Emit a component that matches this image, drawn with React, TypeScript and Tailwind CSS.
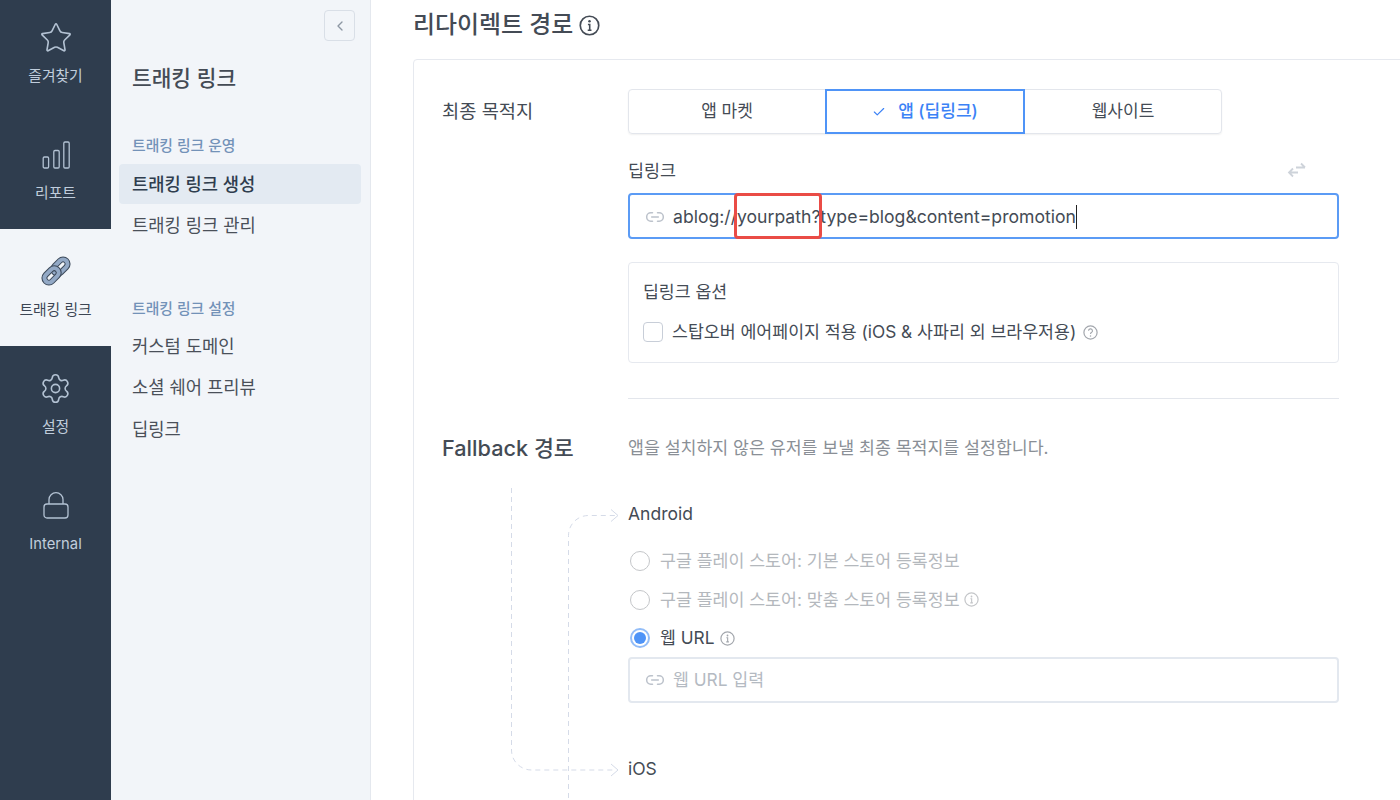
import { Check, ChevronLeft, Link2, Settings, Star } from "lucide-react";

const font = "font-['Inter','Noto_Sans_CJK_KR',sans-serif]";

function ChartIcon() {
  return (
    <svg width="28" height="28" viewBox="0 0 28 28" fill="none" stroke="currentColor" strokeWidth="1.3" className="mt-[2px]">
      <rect x="1.2" y="16" width="5.4" height="11" rx="1.2" />
      <rect x="11.8" y="9.5" width="5.4" height="17.5" rx="1.2" />
      <rect x="21.8" y="1" width="5.4" height="26" rx="1.2" />
    </svg>
  );
}

function LockIcon() {
  return (
    <svg width="26" height="27" viewBox="0 0 26 27" fill="none" stroke="currentColor" strokeWidth="1.3">
      <rect x="1" y="12" width="24" height="14" rx="3" />
      <path d="M6 12V7.5a7 6.8 0 0 1 14 0V12" />
    </svg>
  );
}

function ChainIcon() {
  return (
    <svg width="32" height="32" viewBox="0 0 32 32" fill="none">
      <g transform="rotate(-45 16 16)">
        <rect x="14" y="11.5" width="16.5" height="9" rx="4.5" stroke="#3d4a5b" strokeWidth="6" />
        <rect x="14" y="11.5" width="16.5" height="9" rx="4.5" stroke="#93a9c6" strokeWidth="3.9" />
        <rect x="1.5" y="11.5" width="16.5" height="9" rx="4.5" stroke="#3d4a5b" strokeWidth="6" />
        <rect x="1.5" y="11.5" width="16.5" height="9" rx="4.5" stroke="#93a9c6" strokeWidth="3.9" />
      </g>
    </svg>
  );
}

function InfoIcon({ size, color, mark = "i" }: { size: number; color: string; mark?: string }) {
  return (
    <svg width={size} height={size} viewBox="0 0 20 20" fill="none" className="shrink-0">
      <circle cx="10" cy="10" r="8.8" stroke={color} strokeWidth="1.6" />
      {mark === "i" ? (
        <>
          <circle cx="10" cy="6" r="1.2" fill={color} />
          <path d="M8.5 9h1.7v5.5M8.3 14.5h3.6" stroke={color} strokeWidth="1.5" />
        </>
      ) : (
        <>
          <path d="M7.4 7.8a2.6 2.6 0 1 1 3.8 2.3c-.8.5-1.2 1-1.2 1.9" stroke={color} strokeWidth="1.5" />
          <circle cx="10" cy="14.6" r="1" fill={color} />
        </>
      )}
    </svg>
  );
}

function RailItem({ label, active, children }: { label: string; active?: boolean; children: React.ReactNode }) {
  return (
    <div
      className={`flex h-[117px] flex-col items-center pt-[27px] text-[14.8px] ${
        active ? "bg-[#f2f5f9] text-[#3c4654]" : "text-[#c0cddc]"
      }`}
    >
      <div className={`flex h-[30px] items-center justify-center ${active ? "" : "text-[#b3c2d3]"}`}>{children}</div>
      <span className="mt-[14px] leading-5">{label}</span>
    </div>
  );
}

function Radio({ label, checked, children }: { label: string; checked?: boolean; children?: React.ReactNode }) {
  return (
    <div className={`flex h-[38.5px] items-center text-[17.3px] ${checked ? "text-[#444b55]" : "text-[#b4b8bd]"}`}>
      {checked ? (
        <span className="ml-[2px] flex size-5 items-center justify-center rounded-full border-2 border-[#93bdf8]">
          <span className="size-3 rounded-full bg-[#4f94f7]" />
        </span>
      ) : (
        <span className="ml-[2px] size-5 rounded-full border-[1.5px] border-[#c4c6c9]" />
      )}
      <span className="ml-[10px]">{label}</span>
      {children}
    </div>
  );
}

export default function App() {
  return (
    <div className={`flex h-[800px] w-[1400px] overflow-hidden bg-white ${font}`}>
      {/* icon rail */}
      <aside className="w-[111px] shrink-0 bg-[#2f3d4e]">
        <div className="-mt-[5px]">
          <RailItem label="즐겨찾기">
            <Star size={34} strokeWidth={1.15} className="mt-[2px]" />
          </RailItem>
          <RailItem label="리포트">
            <ChartIcon />
          </RailItem>
          <RailItem label="트래킹 링크" active>
            <ChainIcon />
          </RailItem>
          <RailItem label="설정">
            <Settings size={33} strokeWidth={1.15} />
          </RailItem>
          <RailItem label="Internal">
            <LockIcon />
          </RailItem>
        </div>
      </aside>

      {/* sub menu */}
      <nav className="w-[260px] shrink-0 border-r border-[#e4e8ee] bg-[#f2f5f9] pr-[9px] pl-2">
        <div className="flex justify-end pt-[10px] pr-[6px]">
          <button className="flex size-[31px] items-center justify-center rounded border-[1.5px] border-[#d9dfe7] text-[#8d97a3]">
            <ChevronLeft size={16} />
          </button>
        </div>
        <h2 className="mt-[23px] pl-[13px] text-[21.4px] leading-7 font-medium text-[#444b55]">트래킹 링크</h2>
        <p className="mt-[44px] pl-[13px] text-[14.85px] leading-5 font-medium text-[#7392b8]">트래킹 링크 운영</p>
        <div className="mt-[8px] flex h-10 items-center rounded bg-[#e3eaf2] pt-[2px] pl-[13px] text-[17.7px] font-medium text-[#2f3d4e]">
          트래킹 링크 생성
        </div>
        <div className="mt-[1px] flex h-10 items-center pt-[2px] pl-[13px] text-[17.7px] text-[#4a5059]">트래킹 링크 관리</div>
        <p className="mt-[54px] pl-[13px] text-[14.85px] leading-5 font-medium text-[#7392b8]">트래킹 링크 설정</p>
        <div className="mt-[8px] flex h-[41px] items-center pl-[13px] text-[17.7px] text-[#4a5059]">커스텀 도메인</div>
        <div className="flex h-[41.5px] items-center pl-[13px] text-[17.7px] text-[#4a5059]">소셜 쉐어 프리뷰</div>
        <div className="flex h-[41px] items-center pl-[13px] text-[17.7px] text-[#4a5059]">딥링크</div>
      </nav>

      {/* main */}
      <main className="min-w-0 flex-1 pl-[42px]">
        <div className="flex h-[59px] items-start pt-[7px]">
          <h1 className="text-[23.9px] leading-9 font-medium text-[#444b55]">리다이렉트 경로</h1>
          <span className="mt-[8px] ml-[6px]">
            <InfoIcon size={21} color="#444b55" />
          </span>
        </div>

        <section className="relative h-[800px] w-[1100px] rounded-t border border-[#e6e9ef] pt-[29px] pl-[28px]">
          <div className="flex">
            <div className="w-[186px] pt-[11px] text-[18.7px] leading-6 text-[#444b55]">최종 목적지</div>
            <div className="flex h-[45px] w-[594px] rounded border border-[#e3e6ec] text-[17px] text-[#444b55] shadow-[0_1px_2px_rgba(0,0,0,0.06)]">
              <div className="flex w-[196px] items-center justify-center">앱 마켓</div>
              <div className="-my-px flex w-[200px] items-center justify-center border-2 border-[#4f94f7] font-medium text-[#3b82f6]">
                <Check size={14} strokeWidth={2} className="mr-[12px]" />앱 (딥링크)
              </div>
              <div className="flex flex-1 items-center justify-center">웹사이트</div>
            </div>
          </div>

          <div className="ml-[186px] w-[711px]">
            <div className="mt-[26px] flex h-[23px] items-center justify-between pr-[32px] text-[17.4px] text-[#444b55]">
              <span>딥링크</span>
              <svg width="20" height="16" viewBox="0 0 20 16" fill="none" stroke="#ced3da" strokeWidth="1.8" className="-mt-[3px]">
                <path d="M9 5.5h9M14 1.5l4 4M11 10.5H2M6 6.5l-4 4 4 4" />
              </svg>
            </div>
            <div className="relative mt-[10px] flex h-[46px] items-center rounded border-2 border-[#5b9bf5] pt-[2px] pl-[15px] text-[17.6px] text-[#444b55]">
              <Link2 size={20} strokeWidth={1.8} className="text-[#bcc2cb]" />
              <span className="ml-[8px]">ablog://yourpath?type=blog&amp;content=promotion</span>
              <span className="h-6 w-px bg-[#222]" />
              <span className="absolute top-[-2px] left-[104px] h-[46px] w-[88px] rounded-sm border-[3px] border-[#ea4c46]" />
            </div>

            <div className="mt-[23px] h-[101px] rounded border border-[#e6e9ef] px-[14px] pt-[17px]">
              <p className="text-[17.25px] leading-6 text-[#444b55]">딥링크 옵션</p>
              <div className="mt-[16px] flex items-center text-[17.3px] leading-6 text-[#444b55]">
                <span className="size-5 rounded border border-[#c8ced8]" />
                <span className="ml-[9px]">스탑오버 에어페이지 적용 (iOS &amp; 사파리 외 브라우저용)</span>
                <span className="ml-[7px]">
                  <InfoIcon size={15} color="#a3a7ad" mark="?" />
                </span>
              </div>
            </div>

            <div className="mt-[35px] h-px bg-[#e3e6ec]" />
          </div>

          <div className="mt-[35px] flex items-center">
            <div className="w-[186px] text-[21.7px] leading-7 font-medium text-[#444b55]">Fallback 경로</div>
            <p className="text-[17.3px] text-[#8a8f96]">앱을 설치하지 않은 유저를 보낼 최종 목적지를 설정합니다.</p>
          </div>

          <div className="ml-[186px] w-[711px]">
            <p className="mt-[40px] text-[17.5px] leading-6 text-[#444b55]">Android</p>
            <div className="mt-[16px]">
              <Radio label="구글 플레이 스토어: 기본 스토어 등록정보" />
              <Radio label="구글 플레이 스토어: 맞춤 스토어 등록정보">
                <span className="ml-[4px]">
                  <InfoIcon size={15} color="#c4c6c9" />
                </span>
              </Radio>
              <Radio label="웹 URL" checked>
                <span className="ml-[5px]">
                  <InfoIcon size={15} color="#a3a7ad" />
                </span>
              </Radio>
            </div>
            <div className="-mt-px flex h-[46px] items-center rounded border-2 border-[#e3e8ef] pl-[15px] text-[17.3px] text-[#b4bac2]">
              <Link2 size={20} strokeWidth={1.8} className="text-[#bcc2cb]" />
              <span className="ml-[8px]">웹 URL 입력</span>
            </div>
            <p className="mt-[54px] text-[17.5px] leading-6 text-[#444b55]">iOS</p>
          </div>

          {/* dashed connectors */}
          <svg
            className="absolute top-[427px] left-[96px]"
            width="112"
            height="320"
            viewBox="0 0 112 320"
            fill="none"
            stroke="#d5dbe8"
            strokeWidth="1"
          >
            <path strokeDasharray="5 4" d="M1.5 1V263a20 20 0 0 0 20 20H106" />
            <path strokeDasharray="5 4" d="M58.5 320V48.5a20 20 0 0 1 20-20H106" />
            <path d="M101 22.5l7 6-7 6M101 277l7 6-7 6" />
          </svg>
        </section>
      </main>
    </div>
  );
}
